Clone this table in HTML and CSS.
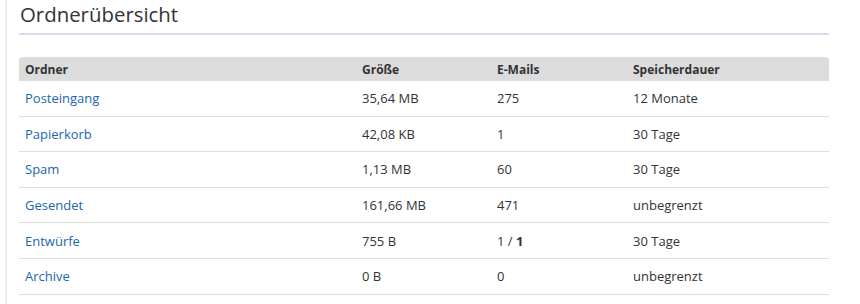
FILE: index.html
```html
<!DOCTYPE html>
<html lang="de">
<head>
<meta charset="utf-8">
<title>Ordnerübersicht</title>
<link rel="stylesheet" href="styles.css">
</head>
<body>
<div class="frame">
  <div class="content">
    <h1 class="title">Ordnerübersicht</h1>
    <table class="folders">
      <colgroup>
        <col class="c1"><col class="c2"><col class="c3"><col class="c4">
      </colgroup>
      <thead>
        <tr><th>Ordner</th><th>Größe</th><th>E-Mails</th><th>Speicherdauer</th></tr>
      </thead>
      <tbody>
        <tr><td><a href="#">Posteingang</a></td><td>35,64 MB</td><td>275</td><td>12 Monate</td></tr>
        <tr><td><a href="#">Papierkorb</a></td><td>42,08 KB</td><td>1</td><td>30 Tage</td></tr>
        <tr><td><a href="#">Spam</a></td><td>1,13 MB</td><td>60</td><td>30 Tage</td></tr>
        <tr><td><a href="#">Gesendet</a></td><td>161,66 MB</td><td>471</td><td>unbegrenzt</td></tr>
        <tr><td><a href="#">Entwürfe</a></td><td>755 B</td><td>1 / <b>1</b></td><td>30 Tage</td></tr>
        <tr><td><a href="#">Archive</a></td><td>0 B</td><td>0</td><td>unbegrenzt</td></tr>
      </tbody>
    </table>
  </div>
</div>
</body>
</html>
```
FILE: styles.css
```css
html, body {
  margin: 0;
  padding: 0;
  background: #fff;
}
body {
  font-family: "Open Sans", "Noto Sans", sans-serif;
  font-size: 13px;
  color: #333;
}
.frame {
  margin-left: 5px;
  border-left: 2px solid #eeeeee;
  min-height: 304px;
  box-sizing: border-box;
}
.content {
  width: 810px;
  margin-left: 12px;
}
.title {
  margin: 0;
  padding: 1px 0 5px 1px;
  font-size: 20.4px;
  font-weight: 400;
  line-height: 27px;
  color: #333;
  border-bottom: 2px solid #d3ddec;
}
.folders {
  margin-top: 22px;
  width: 810px;
  border-collapse: separate;
  border-spacing: 0;
  table-layout: fixed;
}
.c1 { width: 337px; }
.c2 { width: 135px; }
.c3 { width: 136px; }
.c4 { width: 202px; }
.folders th {
  background: #dcdcdc;
  text-align: left;
  font-weight: 700;
  font-size: 12px;
  height: 24px;
  padding: 0 6px;
  color: #333;
}
.folders th:first-child { border-top-left-radius: 4px; }
.folders th:last-child { border-top-right-radius: 4px; }
.folders td {
  height: 35.6px;
  padding: 0 6px;
  box-sizing: border-box;
  border-bottom: 1px solid #dddddd;
  vertical-align: middle;
}
.folders a {
  color: #1b66ad;
  text-decoration: none;
}
.folders b { font-weight: 700; }
```
